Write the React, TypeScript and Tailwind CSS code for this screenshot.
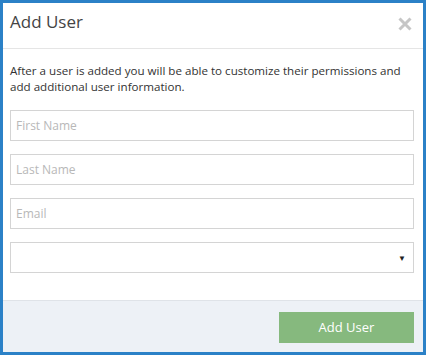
import React from 'react';

const fields = ['First Name', 'Last Name', 'Email'];

export default function App() {
  return (
    <div
      className="w-[426px] h-[355px] border-[3px] border-[#2b81c7] bg-white flex flex-col text-[#333]"
      style={{ fontFamily: '"Open Sans", "Liberation Sans", sans-serif' }}
    >
      {/* header */}
      <div className="h-[46px] shrink-0 border-b border-[#e5e5e5] flex items-center justify-between pl-[7px] pr-[11px]">
        <h2 className="text-[17px] leading-none text-[#444] -mt-[8px]">Add User</h2>
        <svg width="14" height="14" viewBox="0 0 14 14" className="-mt-[3px]">
          <path d="M1.5 1.5 L12.5 12.5 M12.5 1.5 L1.5 12.5" stroke="#c6c6c6" strokeWidth="3" />
        </svg>
      </div>

      {/* body */}
      <div className="flex-1 pl-[7px] pr-[9px] pt-[14px]">
        <p className="text-[11.6px] leading-[16px] text-[#333] pr-1">
          After a user is added you will be able to customize their permissions and add additional user information.
        </p>
        <div className="mt-[15px] flex flex-col gap-[13px]">
          {fields.map((f) => (
            <input
              key={f}
              placeholder={f}
              className="h-[31px] w-full border border-[#d4d4d4] px-[5px] text-[12px] placeholder:text-[#b8b8b8] outline-none"
            />
          ))}
          <div className="h-[31px] w-full border border-[#d4d4d4] flex items-center justify-end pr-[7px]">
            <span className="text-[8px] text-[#222]">▼</span>
          </div>
        </div>
      </div>

      {/* footer */}
      <div className="h-[52px] shrink-0 bg-[#edf1f6] border-t border-[#dfe3e8] flex justify-end items-start pt-[11px] pr-[9px]">
        <button className="w-[135px] h-[31px] bg-[#86b97e] text-white text-[13px]">Add User</button>
      </div>
    </div>
  );
}
